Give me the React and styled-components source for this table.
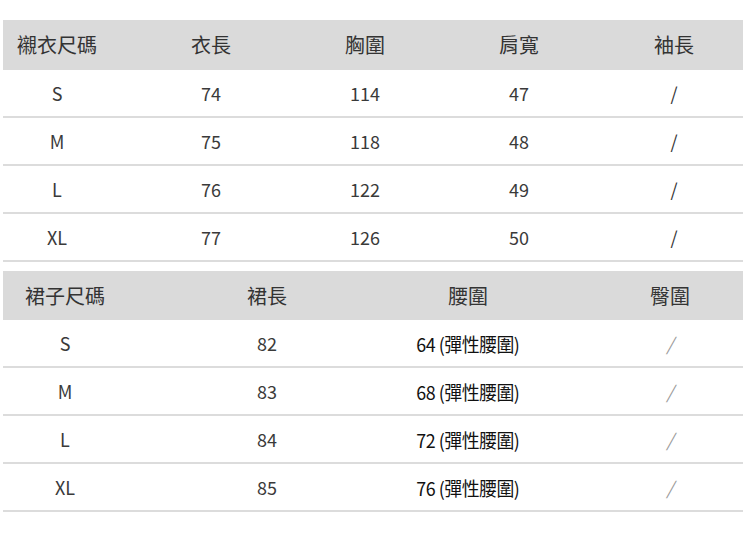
import React from "react";
import styled, { createGlobalStyle } from "styled-components";

const GlobalStyle = createGlobalStyle`
  body {
    margin: 0;
    background: #fff;
    font-family: "Noto Sans CJK TC", "Noto Sans", sans-serif;
  }
`;

const SPage = styled.div`
  width: 740px;
  padding: 20px 0 0 3px;
  display: flex;
  flex-direction: column;
  gap: 9px;
`;

const STable = styled.div`
  display: flex;
  flex-direction: column;
  overflow: hidden;
`;

const SRow = styled.div`
  display: grid;
  grid-template-columns: ${p => p.$cols};
  align-items: center;
  box-sizing: border-box;
  height: ${p => (p.$head ? p.$headHeight : 48)}px;
  background: ${p => (p.$head ? "#dadada" : "#fff")};
  border-bottom: ${p => (p.$head ? "none" : "2px solid #dcdcdc")};
`;

const SCell = styled.div`
  text-align: center;
  font-size: ${p => (p.$head ? 20 : 18)}px;
  color: ${p => (p.$head ? "#333" : "#3a3a3a")};
  line-height: 1;
  white-space: nowrap;
`;

const SWaist = styled.span`
  display: inline-block;
  color: #111;
  font-size: 19px;
  letter-spacing: -0.5px;
  transform: scaleX(0.94);
`;

const SSlash = styled.span`
  color: ${p => (p.$light ? "#9a9a9a" : "#333")};
  font-style: ${p => (p.$light ? "italic" : "normal")};
`;

const shirt = {
  cols: "108px 200px 108px 200px 110px",
  headHeight: 50,
  head: ["襯衣尺碼", "衣長", "胸圍", "肩寬", "袖長"],
  rows: [
    ["S", "74", "114", "47", "/"],
    ["M", "75", "118", "48", "/"],
    ["L", "76", "122", "49", "/"],
    ["XL", "77", "126", "50", "/"]
  ]
};

const skirt = {
  cols: "124px 280px 122px 282px",
  headHeight: 49,
  head: ["裙子尺碼", "裙長", "腰圍", "臀圍"],
  rows: [
    ["S", "82", "64 (彈性腰圍)", "/"],
    ["M", "83", "68 (彈性腰圍)", "/"],
    ["L", "84", "72 (彈性腰圍)", "/"],
    ["XL", "85", "76 (彈性腰圍)", "/"]
  ]
};

const renderValue = (value, skirtTable) => {
  if (value === "/") return <SSlash $light={skirtTable}>/</SSlash>;
  if (value.includes("彈性")) return <SWaist>{value}</SWaist>;
  return value;
};

const SizeTable = ({ data, skirtTable }) => (
  <STable>
    <SRow $head $headHeight={data.headHeight} $cols={data.cols}>
      {data.head.map(h => (
        <SCell $head key={h}>
          {h}
        </SCell>
      ))}
    </SRow>
    {data.rows.map(row => (
      <SRow key={row[0]} $cols={data.cols}>
        {row.map((v, i) => (
          <SCell key={i}>{renderValue(v, skirtTable)}</SCell>
        ))}
      </SRow>
    ))}
  </STable>
);

const App = () => (
  <>
    <GlobalStyle />
    <SPage>
      <SizeTable data={shirt} />
      <SizeTable data={skirt} skirtTable />
    </SPage>
  </>
);

export default App;
